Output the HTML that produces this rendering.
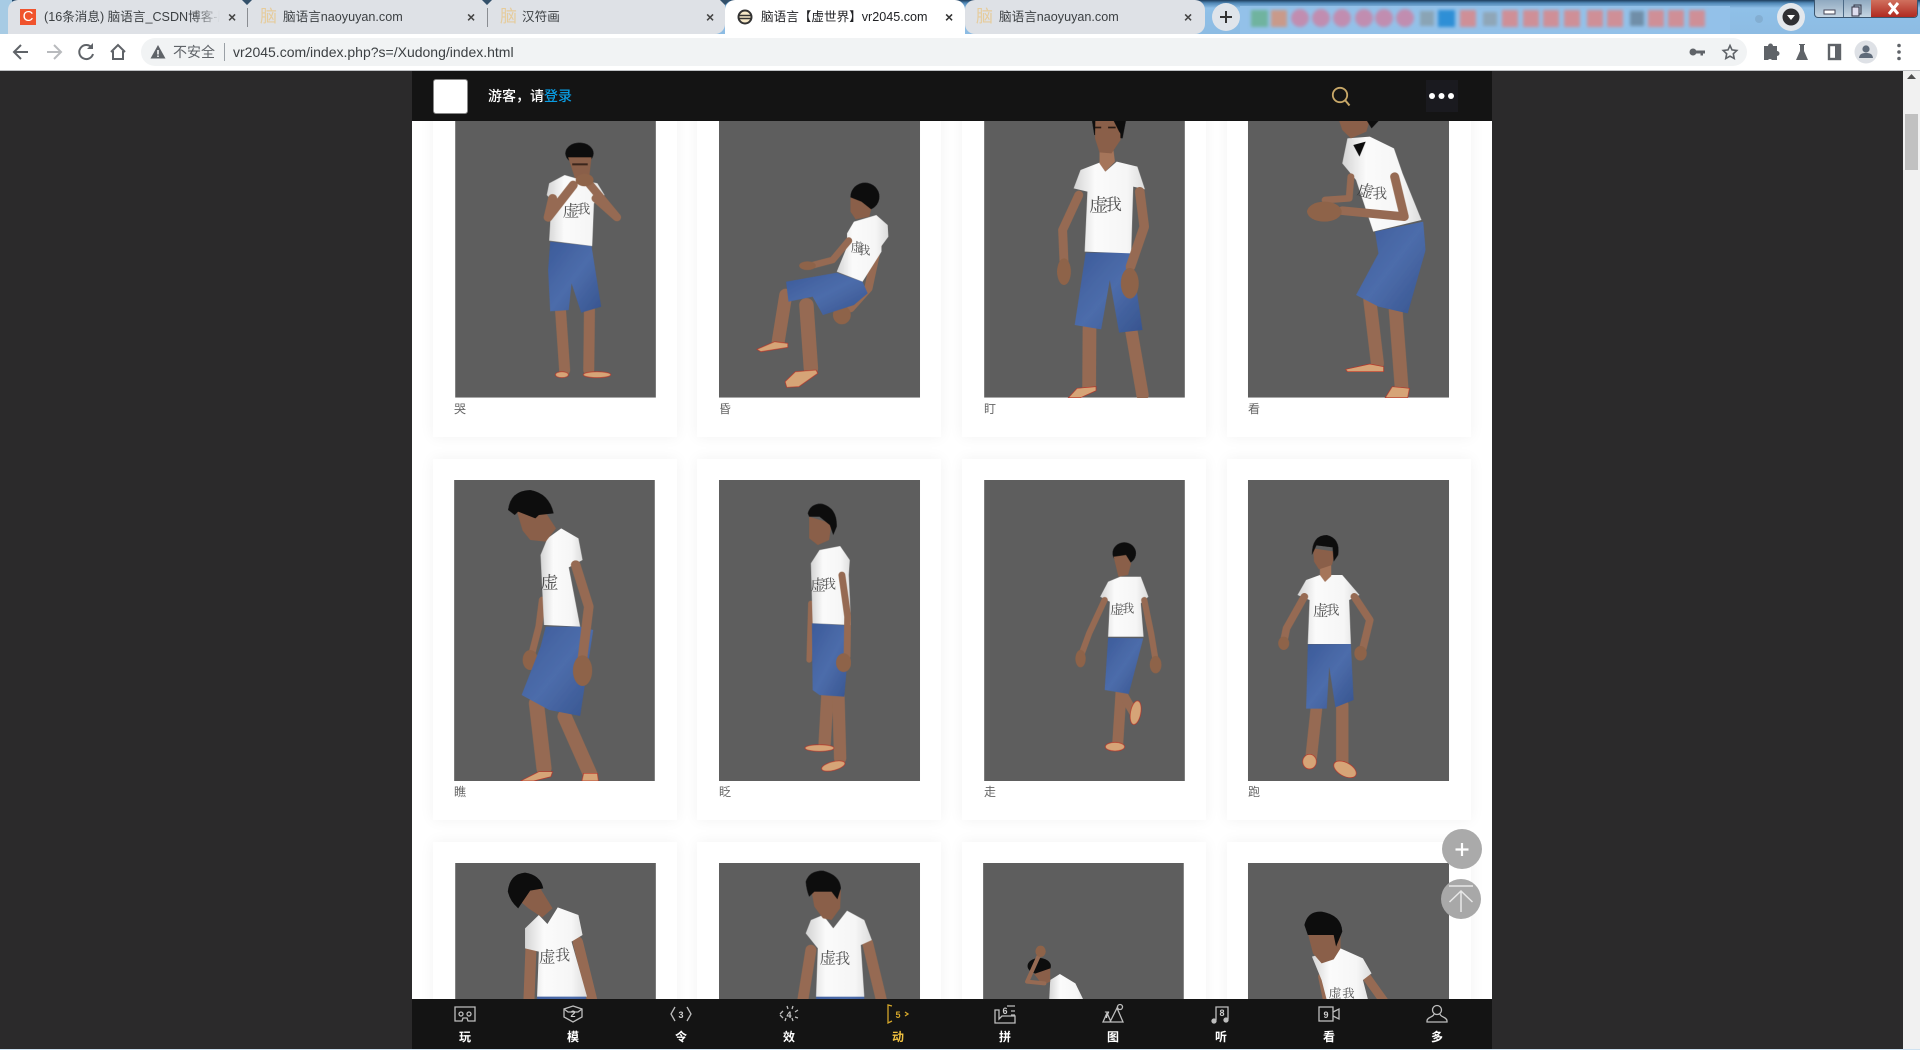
<!DOCTYPE html>
<html lang="zh"><head><meta charset="utf-8"><title>脑语言【虚世界】vr2045.com</title>
<style>
*{box-sizing:border-box}
html,body{margin:0;padding:0;width:1920px;height:1050px;overflow:hidden;background:#2b2a2b;font-family:"Liberation Sans","Noto Sans CJK SC",sans-serif}
.a{position:absolute}
.tab{position:absolute;top:0;height:34px;font-size:12.6px;line-height:34px;color:#3c4043;white-space:nowrap}
.x{font-size:14px;color:#444;font-weight:700}
.ic{color:#e6cc9c;font-size:17px}
.card{position:absolute;width:244px;background:#fff;box-shadow:0 0 14px rgba(0,0,0,.055)}
.lb{position:absolute;font-size:12px;line-height:14px;color:#666}
svg.f{position:absolute;z-index:2}
svg text.s{font-family:"Liberation Serif","Noto Serif CJK SC",serif;fill:#333;font-weight:400;opacity:.85}
.sh{fill:url(#gsh)}.hr{fill:#0c0c0d}.fc{fill:#8a5f48}.st{fill:url(#gst)}
.sk{fill:none;stroke:#966b52;stroke-linecap:round;stroke-linejoin:round}
.hd{fill:#8e6349}
.fl{fill:#d6a477;stroke:#b9362a;stroke-width:2}
</style></head><body>

<!-- browser chrome -->
<div class="a" style="left:0;top:0;width:1920px;height:34px;background:linear-gradient(#1d3d5c 0,#4f86b5 3px,#8fc0e8 8px,#8dbce3 34px)"></div>
<div class="a" style="left:0;top:0;width:12px;height:34px;background:#a7cbe4"></div>
<div class="a" style="left:8px;top:0;width:717px;height:34px;background:#dee1e6;border-radius:10px 0 10px 0"></div>
<div class="a" style="left:965px;top:0;width:240px;height:34px;background:#dee1e6;border-radius:10px 10px 10px 10px"></div>
<div class="a" style="left:725px;top:0;width:240px;height:34px;background:#fff;border-radius:10px 10px 0 0"></div>
<div class="a" style="left:247px;top:8px;width:1px;height:19px;background:#8a8d92"></div>
<div class="a" style="left:487px;top:8px;width:1px;height:19px;background:#8a8d92"></div>
<svg class="a" style="left:0;top:0" width="1920" height="6"><path d="M242 0l5 5 5-5zM482 0l5 5 5-5zM720 0l5 5 5-5z" fill="#33506a"/></svg>

<div class="a" style="left:20px;top:9px;width:16px;height:16px;background:#f0532d;color:#fff;font-size:15px;line-height:16px;text-align:center">C</div>
<div class="tab" style="left:44px;width:176px;overflow:hidden;-webkit-mask-image:linear-gradient(90deg,#000 85%,transparent)">(16条消息) 脑语言_CSDN博客-脑语言</div>
<div class="tab x" style="left:228px">×</div>
<div class="tab ic" style="left:260px">脑</div>
<div class="tab" style="left:283px">脑语言naoyuyan.com</div>
<div class="tab x" style="left:467px">×</div>
<div class="tab ic" style="left:500px">脑</div>
<div class="tab" style="left:522px">汉符画</div>
<div class="tab x" style="left:706px">×</div>
<svg class="a" style="left:737px;top:9px" width="16" height="16"><circle cx="8" cy="8" r="6.5" fill="#f7e9c8" stroke="#333" stroke-width="2"/><path d="M2 6.5h12M2 9.5h12" stroke="#333" stroke-width="1.6"/></svg>
<div class="tab" style="left:761px;color:#202124">脑语言【虚世界】vr2045.com</div>
<div class="tab x" style="left:945px;color:#333">×</div>
<div class="tab ic" style="left:976px">脑</div>
<div class="tab" style="left:999px">脑语言naoyuyan.com</div>
<div class="tab x" style="left:1184px">×</div>

<svg class="a" style="left:1212px;top:3px" width="30" height="28"><circle cx="14" cy="14" r="14" fill="#dfe4ea"/><path d="M14 8v12M8 14h12" stroke="#333" stroke-width="2"/></svg>
<svg class="a" style="left:1240px;top:0" width="520" height="34">
<defs><filter id="bl" x="-30%" y="-30%" width="160%" height="160%"><feGaussianBlur stdDeviation="1.700"/></filter></defs>
<rect x="0" y="6" width="490" height="28" fill="#93c1e9"/>
<g filter="url(#bl)">
<rect x="11" y="10" width="17" height="17" fill="#6fb39f"/><rect x="31" y="10" width="16" height="17" fill="#c99a8a"/>
<g fill="#c18db0"><circle cx="60" cy="18" r="9"/><circle cx="81" cy="18" r="9"/><circle cx="102" cy="18" r="9"/><circle cx="124" cy="18" r="9"/><circle cx="144" cy="18" r="9"/><circle cx="165" cy="18" r="9"/></g>
<rect x="180" y="11" width="14" height="15" fill="#8aa4b5"/><rect x="198" y="10" width="17" height="17" fill="#2f8fd6"/>
<g fill="#cf8f97"><rect x="220" y="10" width="16" height="17"/><rect x="262" y="10" width="16" height="17"/><rect x="283" y="10" width="16" height="17"/><rect x="303" y="10" width="16" height="17"/><rect x="324" y="10" width="16" height="17"/><rect x="347" y="10" width="16" height="17"/><rect x="367" y="10" width="16" height="17"/><rect x="408" y="10" width="16" height="17"/><rect x="428" y="10" width="16" height="17"/><rect x="449" y="10" width="16" height="17"/></g>
<rect x="243" y="12" width="14" height="14" fill="#8fa6b8"/><rect x="390" y="11" width="14" height="15" fill="#6f8ea8"/>
</g></svg>
<svg class="a" style="left:1752px;top:3px" width="56" height="28"><circle cx="7" cy="16" r="4" fill="#7fa7c9" opacity=".7"/><circle cx="39" cy="14" r="14" fill="#e3e7ec"/><circle cx="39" cy="14" r="8.5" fill="#2f2f33"/><path d="M35 12h8l-4 5z" fill="#fff"/></svg>
<div class="a" style="left:1814px;top:0;width:104px;height:18px;border:1px solid #3b5670;border-top:0;border-radius:0 0 4px 4px;background:linear-gradient(#8fa9c0,#c5d5e2);overflow:hidden">
<div class="a" style="left:56px;top:0;width:47px;height:17px;background:linear-gradient(#d0705e,#b02a20)"></div>
<div class="a" style="left:28px;top:0;width:1px;height:17px;background:#4d6a86"></div>
<svg class="a" style="left:0;top:0" width="104" height="18"><rect x="9" y="10" width="11" height="4" fill="#fff" stroke="#445"/><rect x="39" y="5" width="7" height="9" fill="none" stroke="#334" /><rect x="37" y="7" width="7" height="9" fill="#dde" stroke="#334"/><path d="M74 3l9 11M83 3l-9 11" stroke="#fff" stroke-width="3"/></svg></div>

<div class="a" style="left:0;top:34px;width:1920px;height:36px;background:#fff"></div>
<div class="a" style="left:0;top:70px;width:1920px;height:1px;background:#bfc1c4"></div>
<svg class="a" style="left:0;top:34px" width="140" height="36" fill="none" stroke="#5f6368" stroke-width="2">
<path d="M28 18H15M21 11l-7 7 7 7"/><path d="M47 18h13M54 11l7 7-7 7" stroke="#b8babd"/>
<path d="M92 14a7 7 0 1 0 1 6" /><path d="M93 9v6h-6" fill="#5f6368" stroke="none"/>
<path d="M111 18l7-7 7 7M113 17v8h10v-8"/></svg>
<div class="a" style="left:141px;top:38px;width:1606px;height:28px;border-radius:14px;background:#f1f3f4"></div>
<svg class="a" style="left:150px;top:44px" width="16" height="16"><path d="M8 1l7.5 13.5H.5z" fill="#5f6368"/><path d="M8 6v4.5M8 11.500v1.500" stroke="#fff" stroke-width="1.5"/></svg>
<div class="a" style="left:173px;top:44px;font-size:14px;line-height:16px;color:#5f6368">不安全</div>
<div class="a" style="left:224px;top:43px;width:1px;height:18px;background:#9aa0a6"></div>
<div class="a" style="left:233px;top:43px;font-size:14px;line-height:18px;color:#3c4043">vr2045.com/index.php?s=/Xudong/index.html</div>
<svg class="a" style="left:1688px;top:34px" width="232" height="36">
<g fill="#5f6368"><circle cx="5" cy="18" r="3.500"/><path d="M7 16.500h10v3h-2v2h-2.500v-2H7z"/></g>
<path d="M42 11.500l2 4.400 4.800.6-3.500 3.300.9 4.700-4.200-2.300-4.200 2.300.9-4.700-3.500-3.300 4.800-.6z" fill="none" stroke="#5f6368" stroke-width="1.600"/>
<path d="M76 12h4a2.500 2.500 0 0 1 5 0h4v5a2.500 2.500 0 0 1 0 5v4h-5a2.500 2.500 0 0 0-4 0h-4z" fill="#5f6368"/>
<path d="M111 10h6v1h-1v6l4 9h-12l4-9v-6h-1z" fill="#5f6368"/>
<rect x="141" y="11" width="11" height="14" fill="none" stroke="#5f6368" stroke-width="2.400"/><rect x="147" y="11" width="5" height="14" fill="#5f6368"/>
<circle cx="178" cy="18" r="11.500" fill="#dee1e6"/><circle cx="178" cy="15" r="3.600" fill="#5f6b7a"/><path d="M171 24c.5-4 3-5 7-5s6.500 1 7 5z" fill="#5f6b7a"/>
<g fill="#5f6368"><circle cx="211" cy="11.500" r="1.800"/><circle cx="211" cy="18" r="1.800"/><circle cx="211" cy="24.500" r="1.800"/></g>
</svg>

<!-- page -->
<div class="a" style="left:412px;top:71px;width:1080px;height:978px;background:#fff;overflow:hidden" id="m"></div>
<div class="a" style="left:1903px;top:71px;width:17px;height:979px;background:#f1f1f1"></div>
<svg class="a" style="left:1903px;top:71px" width="17" height="12"><path d="M8.500 3l4.500 5H4z" fill="#505050"/></svg>
<div class="a" style="left:1905px;top:114px;width:13px;height:56px;background:#c1c1c1"></div>

<div class="card" style="left:433px;top:100px;height:337px"></div>
<div class="card" style="left:697px;top:100px;height:337px"></div>
<div class="card" style="left:962px;top:100px;height:337px"></div>
<div class="card" style="left:1227px;top:100px;height:337px"></div>
<div class="card" style="left:433px;top:459px;height:361px"></div>
<div class="card" style="left:697px;top:459px;height:361px"></div>
<div class="card" style="left:962px;top:459px;height:361px"></div>
<div class="card" style="left:1227px;top:459px;height:361px"></div>
<div class="card" style="left:433px;top:842px;height:200px"></div>
<div class="card" style="left:697px;top:842px;height:200px"></div>
<div class="card" style="left:962px;top:842px;height:200px"></div>
<div class="card" style="left:1227px;top:842px;height:200px"></div>

<div class="lb" style="left:454px;top:402px">哭</div><div class="lb" style="left:719px;top:402px">昏</div><div class="lb" style="left:984px;top:402px">盯</div><div class="lb" style="left:1248px;top:402px">看</div>
<div class="lb" style="left:454px;top:785px">瞧</div><div class="lb" style="left:719px;top:785px">眨</div><div class="lb" style="left:984px;top:785px">走</div><div class="lb" style="left:1248px;top:785px">跑</div>

<svg width="0" height="0" style="position:absolute"><defs>
<filter id="sf"><feGaussianBlur stdDeviation="1"/></filter>
<linearGradient id="gsh"><stop offset="0" stop-color="#d4d4d4"/><stop offset=".3" stop-color="#fbfbfb"/><stop offset=".75" stop-color="#f6f6f6"/><stop offset="1" stop-color="#dcdcdc"/></linearGradient>
<linearGradient id="gst" x1="0" y1="0" x2="1" y2="1"><stop offset="0" stop-color="#3c5b9a"/><stop offset=".5" stop-color="#4d6dab"/><stop offset="1" stop-color="#37548f"/></linearGradient>
</defs></svg>

<!-- row 1 left -->
<svg class="f" style="left:420px;top:120px" width="540" height="340" viewBox="0 0 1568 1020" preserveAspectRatio="none">
<defs><clipPath id="c1"><rect x="102" y="0" width="583" height="833"/></clipPath><clipPath id="c2"><rect x="868" y="0" width="584" height="833"/></clipPath></defs>
<g clip-path="url(#c1)"><rect x="102" y="0" width="583" height="833" fill="#5e5e5e"/><g filter="url(#sf)">
<polyline class="sk" stroke-width="32" points="408,570 420,750" /><polyline class="sk" stroke-width="32" points="492,570 490,750"/>
<ellipse class="fl" cx="412" cy="764" rx="19" ry="9"/><ellipse class="fl" cx="514" cy="764" rx="40" ry="9"/>
<polygon class="st" points="378,365 498,378 526,560 468,578 440,490 432,570 378,574 372,450"/>
<polygon class="sh" points="375,190 420,165 470,180 515,190 536,225 505,250 500,378 375,362 382,240 368,225"/>
<ellipse class="hr" cx="463" cy="100" rx="41" ry="32"/><polygon class="fc" points="430,112 498,112 492,165 450,175"/><rect x="442" y="130" width="45" height="6" fill="#3a251b"/>
<polyline class="sk" stroke-width="26" points="385,235 372,292 445,195"/><polyline class="sk" stroke-width="24" points="510,235 572,292 490,190"/>
<ellipse class="hd" cx="478" cy="180" rx="26" ry="19"/>
<text class="s" x="414" y="290" font-size="48">虚</text><text class="s" x="455" y="280" font-size="40">我</text>
</g></g>
<g clip-path="url(#c2)"><rect x="868" y="0" width="584" height="833" fill="#5e5e5e"/><g filter="url(#sf)">
<polyline class="sk" stroke-width="38" points="1062,525 1040,665"/><polyline class="sk" stroke-width="42" points="1122,555 1135,745"/>
<polygon class="fl" points="978,688 1030,665 1068,670 1068,682 990,695"/><polygon class="fl" points="1060,785 1090,755 1150,750 1155,760 1100,800 1065,802"/>
<polyline class="sk" stroke-width="24" points="1330,370 1302,505 1250,565"/><ellipse class="hd" cx="1225" cy="585" rx="26" ry="28"/>
<polygon class="st" points="1063,485 1210,458 1285,485 1300,520 1260,555 1170,585 1140,530 1070,545"/>
<polygon class="sh" points="1240,340 1260,305 1325,285 1358,315 1360,350 1340,378 1340,395 1285,485 1210,455 1240,380"/>
<ellipse class="hr" cx="1292" cy="230" rx="42" ry="42"/><polygon class="fc" points="1250,232 1282,245 1310,268 1305,290 1265,298 1250,275"/>
<polyline class="sk" stroke-width="20" points="1245,362 1198,420 1135,437"/><ellipse class="hd" cx="1125" cy="437" rx="24" ry="13"/>
<text class="s" x="1250" y="395" font-size="38">虚</text><text class="s" x="1272" y="403" font-size="36">我</text>
</g></g></svg>

<!-- row 1 right -->
<svg class="f" style="left:960px;top:120px" width="540" height="340" viewBox="0 0 1568 1020" preserveAspectRatio="none">
<defs><clipPath id="c3"><rect x="70" y="0" width="583" height="833"/></clipPath><clipPath id="c4"><rect x="836" y="0" width="584" height="833"/></clipPath></defs>
<g clip-path="url(#c3)"><rect x="70" y="0" width="583" height="833" fill="#5e5e5e"/><g filter="url(#sf)">
<polyline class="sk" stroke-width="40" points="376,625 375,800"/><polyline class="sk" stroke-width="36" points="498,635 530,825"/>
<polygon class="fl" points="315,833 340,805 395,800 395,812 350,833"/>
<polygon class="st" points="365,398 497,398 530,630 462,638 435,480 410,628 333,615"/>
<polygon class="sh" points="330,205 350,150 405,128 422,155 455,125 515,140 537,208 503,200 497,400 362,395 370,215"/>
<polygon fill="#a5745a" points="405,85 445,85 450,125 422,155 405,130"/>
<polygon class="hr" points="383,0 482,0 472,55 390,45"/>
<polygon class="fc" points="393,0 465,0 466,60 440,100 405,97 392,55"/>
<rect x="392" y="20" width="18" height="5" fill="#2a1b14"/><rect x="430" y="20" width="22" height="5" fill="#2a1b14"/><polygon class="hr" points="445,0 482,0 472,50 462,35"/>
<polyline class="sk" stroke-width="26" points="345,225 298,330 302,425"/><ellipse class="hd" cx="302" cy="455" rx="20" ry="40"/>
<polyline class="sk" stroke-width="28" points="522,215 535,320 495,440"/><ellipse class="hd" cx="493" cy="490" rx="26" ry="46"/>
<text class="s" x="375" y="275" font-size="55">虚</text><text class="s" x="420" y="270" font-size="50">我</text>
</g></g>
<g clip-path="url(#c4)"><rect x="836" y="0" width="584" height="833" fill="#5e5e5e"/><g filter="url(#sf)">
<polyline class="sk" stroke-width="38" points="1190,540 1212,730"/><polyline class="sk" stroke-width="40" points="1265,570 1282,800"/>
<polygon class="fl" points="1120,748 1190,732 1230,740 1230,755 1125,755"/><polygon class="fl" points="1235,833 1255,800 1305,805 1300,833"/>
<polygon class="st" points="1205,335 1345,305 1352,390 1300,580 1215,560 1150,525 1215,400"/>
<polygon class="sh" points="1125,55 1190,50 1260,85 1285,160 1340,300 1200,335 1150,180 1110,130"/>
<polygon class="fc" points="1100,0 1190,0 1180,35 1135,55 1110,30"/><polygon class="hr" points="1180,0 1218,0 1195,25"/>
<polygon class="hr" points="1142,75 1178,65 1160,110"/>
<polyline class="sk" stroke-width="20" points="1135,170 1130,235 1060,240"/>
<polyline class="sk" stroke-width="26" points="1262,170 1290,290 1110,272"/><ellipse class="hd" cx="1058" cy="275" rx="50" ry="30"/>
<text class="s" x="1155" y="230" font-size="48" transform="rotate(15 1180 210)">虚</text><text class="s" x="1198" y="235" font-size="42">我</text>
</g></g></svg>

<!-- row 2 left -->
<svg class="f" style="left:420px;top:460px" width="540" height="340" viewBox="0 0 1568 1020" preserveAspectRatio="none">
<defs><clipPath id="c5"><rect x="99" y="60" width="583" height="903"/></clipPath><clipPath id="c6"><rect x="868" y="60" width="584" height="903"/></clipPath></defs>
<g clip-path="url(#c5)"><rect x="99" y="60" width="583" height="903" fill="#5e5e5e"/><g filter="url(#sf)">
<polyline class="sk" stroke-width="44" points="338,730 360,925"/><polyline class="sk" stroke-width="42" points="420,770 495,945"/>
<polygon class="fl" points="292,963 345,935 385,935 380,950 330,963"/><polygon class="fl" points="470,963 475,940 515,940 518,963"/>
<polyline class="sk" stroke-width="20" points="355,420 345,500 325,580"/><ellipse class="hd" cx="320" cy="600" rx="22" ry="30"/>
<polygon class="st" points="365,500 465,500 503,510 465,768 375,750 295,705 350,560"/>
<polygon class="sh" points="350,285 370,235 410,205 460,235 472,300 432,322 465,500 360,495"/>
<polyline class="sk" stroke-width="28" points="452,315 490,440 470,610"/><ellipse class="hd" cx="472" cy="632" rx="28" ry="46"/>
<polygon class="fc" points="280,150 360,150 395,205 365,245 320,240 298,212"/>
<path class="hr" d="M256 150 Q262 92 320 90 Q375 100 388 160 L345 165 L335 175 L285 155 L275 165Z"/>
<text class="s" x="350" y="385" font-size="52">虚</text>
</g></g>
<g clip-path="url(#c6)"><rect x="868" y="60" width="584" height="903" fill="#5e5e5e"/><g filter="url(#sf)">
<polyline class="sk" stroke-width="36" points="1183,705 1175,850"/><polyline class="sk" stroke-width="36" points="1215,710 1220,895"/>
<ellipse class="fl" cx="1160" cy="864" rx="42" ry="10"/><ellipse class="fl" cx="1200" cy="918" rx="35" ry="13" transform="rotate(-15 1200 918)"/>
<polyline class="sk" stroke-width="16" points="1135,430 1130,600"/>
<polygon class="st" points="1138,490 1250,497 1232,710 1160,705 1140,690"/>
<polygon class="sh" points="1135,310 1160,270 1220,258 1248,300 1245,345 1252,495 1140,490"/>
<polyline class="sk" stroke-width="20" points="1225,345 1242,470 1240,590"/><ellipse class="hd" cx="1230" cy="608" rx="22" ry="28"/>
<polygon class="fc" points="1130,170 1195,190 1188,240 1155,255 1130,235"/>
<path class="hr" d="M1126 160 Q1135 128 1170 132 Q1212 145 1210 200 L1200 225 L1190 195 L1160 170 L1130 170Z"/>
<text class="s" x="1134" y="390" font-size="44">虚</text><text class="s" x="1168" y="385" font-size="40">我</text>
</g></g></svg>

<!-- row 2 right -->
<svg class="f" style="left:960px;top:460px" width="540" height="340" viewBox="0 0 1568 1020" preserveAspectRatio="none">
<defs><clipPath id="c7"><rect x="70" y="60" width="583" height="903"/></clipPath><clipPath id="c8"><rect x="836" y="60" width="584" height="903"/></clipPath></defs>
<g clip-path="url(#c7)"><rect x="70" y="60" width="583" height="903" fill="#5e5e5e"/><g filter="url(#sf)">
<polyline class="sk" stroke-width="32" points="468,690 458,850"/><polyline class="sk" stroke-width="26" points="472,700 508,765"/>
<ellipse class="fl" cx="510" cy="758" rx="15" ry="36" transform="rotate(10 510 758)"/><ellipse class="fl" cx="450" cy="860" rx="28" ry="13"/>
<polygon class="st" points="430,533 532,535 490,702 420,690"/>
<polygon class="sh" points="407,410 430,365 465,350 525,350 547,410 525,430 533,530 430,530 435,425"/>
<polyline class="sk" stroke-width="18" points="420,420 375,520 352,585"/><ellipse class="hd" cx="350" cy="596" rx="15" ry="26"/>
<polyline class="sk" stroke-width="18" points="535,420 555,520 567,595"/><ellipse class="hd" cx="568" cy="614" rx="17" ry="26"/>
<ellipse class="hr" cx="477" cy="280" rx="34" ry="33"/><polygon class="fc" points="446,290 482,285 497,310 488,345 460,350"/>
<text class="s" x="436" y="462" font-size="40">虚</text><text class="s" x="470" y="458" font-size="36">我</text>
</g></g>
<g clip-path="url(#c8)"><rect x="836" y="60" width="584" height="903" fill="#5e5e5e"/><g filter="url(#sf)">
<polyline class="sk" stroke-width="34" points="1035,745 1020,890"/><polyline class="sk" stroke-width="36" points="1110,735 1110,910"/>
<ellipse class="fl" cx="1015" cy="905" rx="20" ry="22"/><ellipse class="fl" cx="1118" cy="928" rx="36" ry="20" transform="rotate(30 1118 928)"/>
<polygon class="st" points="1010,553 1135,552 1143,720 1090,742 1072,620 1065,746 1005,746"/>
<polygon class="sh" points="980,405 1005,360 1045,345 1110,345 1160,405 1130,420 1135,552 1010,552 1015,420"/>
<polyline class="sk" stroke-width="22" points="1000,410 948,505 940,545"/><ellipse class="hd" cx="940" cy="550" rx="16" ry="20"/>
<polyline class="sk" stroke-width="22" points="1145,410 1190,480 1170,565"/><ellipse class="hd" cx="1163" cy="580" rx="18" ry="22"/>
<polygon fill="#a5745a" points="1045,320 1078,315 1078,348 1060,366 1045,345"/><polygon class="fc" points="1025,265 1090,275 1080,315 1042,328 1028,305"/>
<path class="hr" d="M1022 285 Q1022 225 1065 225 Q1105 235 1098 285 L1085 305 L1082 262 L1035 256 Z"/>
<text class="s" x="1025" y="466" font-size="44">虚</text><text class="s" x="1062" y="464" font-size="40">我</text>
</g></g></svg>

<!-- row 3 left -->
<svg class="f" style="left:420px;top:800px" width="540" height="250" viewBox="0 0 1568 750" preserveAspectRatio="none">
<defs><clipPath id="c9"><rect x="102" y="189" width="583" height="500"/></clipPath><clipPath id="c10"><rect x="868" y="189" width="584" height="500"/></clipPath></defs>
<g clip-path="url(#c9)"><rect x="102" y="189" width="583" height="500" fill="#5e5e5e"/><g filter="url(#sf)">
<polyline class="sk" stroke-width="32" points="322,450 316,610"/><polyline class="sk" stroke-width="30" points="458,425 502,610"/>
<polygon class="st" points="340,580 480,580 485,620 340,620"/>
<polygon class="sh" points="305,445 305,385 345,345 370,372 400,322 460,345 472,405 440,425 485,590 340,590 345,455"/>
<polygon class="fc" points="275,290 345,258 385,325 355,352 315,325"/><path class="hr" d="M255 275 Q260 222 305 218 Q350 225 358 265 L320 272 L285 325 Q262 305 255 275Z"/>
<text class="s" x="345" y="488" font-size="48">虚</text><text class="s" x="392" y="480" font-size="44">我</text>
</g></g>
<g clip-path="url(#c10)"><rect x="868" y="189" width="584" height="500" fill="#5e5e5e"/><g filter="url(#sf)">
<polyline class="sk" stroke-width="32" points="1135,450 1110,610"/><polyline class="sk" stroke-width="32" points="1300,430 1342,610"/>
<polygon class="st" points="1150,580 1290,580 1290,620 1150,620"/>
<polygon class="sh" points="1120,400 1135,360 1170,345 1200,385 1240,332 1290,360 1312,420 1280,435 1290,590 1150,590 1155,445"/>
<polygon class="fc" points="1135,265 1222,270 1220,325 1195,360 1170,355 1145,320"/><path class="hr" d="M1120 245 Q1130 212 1170 212 Q1220 225 1222 265 L1212 298 L1195 275 L1145 275 L1130 290 Q1122 270 1120 245Z"/>
<text class="s" x="1160" y="490" font-size="48">虚</text><text class="s" x="1205" y="490" font-size="44">我</text>
</g></g></svg>

<!-- row 3 right -->
<svg class="f" style="left:960px;top:800px" width="540" height="250" viewBox="0 0 1568 750" preserveAspectRatio="none">
<defs><clipPath id="c11"><rect x="67" y="189" width="583" height="500"/></clipPath><clipPath id="c12"><rect x="836" y="189" width="584" height="500"/></clipPath></defs>
<g clip-path="url(#c11)"><rect x="67" y="189" width="583" height="500" fill="#5e5e5e"/><g filter="url(#sf)">
<polygon class="sh" points="258,620 262,540 290,522 335,550 368,620"/>
<ellipse class="hr" cx="230" cy="498" rx="34" ry="24"/><polygon class="fc" points="215,522 262,505 262,545 240,555"/>
<polyline class="sk" stroke-width="12" points="232,460 195,545 245,550"/><ellipse class="hd" cx="234" cy="454" rx="15" ry="17"/>
</g></g>
<g clip-path="url(#c12)"><rect x="836" y="189" width="584" height="500" fill="#5e5e5e"/><g filter="url(#sf)">
<polyline class="sk" stroke-width="24" points="1052,530 1068,610"/><polyline class="sk" stroke-width="26" points="1180,530 1232,605"/>
<polygon class="sh" points="1022,470 1105,445 1170,475 1195,520 1170,540 1190,620 1070,620 1050,540"/>
<polygon class="fc" points="1010,400 1105,400 1105,445 1085,478 1050,490 1025,460"/><path class="hr" d="M1000 375 Q1010 332 1050 335 Q1108 345 1110 395 L1092 440 L1085 405 L1010 405 Z"/>
<text class="s" x="1070" y="592" font-size="38">虚</text><text class="s" x="1110" y="592" font-size="36">我</text>
</g></g></svg>

<!-- floating buttons -->
<svg class="a" style="left:1440px;top:827px;z-index:3" width="46" height="95">
<circle cx="22" cy="22" r="20" fill="#aaa"/><path d="M22 16v13M15.500 22.500h13" stroke="#fff" stroke-width="2.200"/>
<circle cx="21" cy="72" r="20" fill="#a8a8a8"/><path d="M9 59h24M21 85V64M9.500 75L21 64l11.500 11" fill="none" stroke="#e8e8e8" stroke-width="1.500"/></svg>

<!-- header -->
<div class="a" style="left:412px;top:71px;width:1080px;height:50px;background:#141414;z-index:4">
<div class="a" style="left:21px;top:8px;width:35px;height:35px;background:#fff;border-radius:3px;border:1px solid #888"></div>
<div class="a" style="left:76px;top:17px;font-size:14px;font-weight:500;line-height:16px;color:#fff;white-space:nowrap">游客，请<span style="color:#0a9be0">登录</span></div>
<div class="a" style="left:1014px;top:9px;width:32px;height:32px;background:#1a1a1f"></div>
<svg class="a" style="left:918px;top:15px" width="140" height="22"><circle cx="10" cy="9" r="7.200" fill="none" stroke="#c8a868" stroke-width="1.800"/><path d="M15 14l4.500 5.500" stroke="#c8a868" stroke-width="2"/><g fill="#fff"><circle cx="102" cy="10" r="3"/><circle cx="111.500" cy="10" r="3"/><circle cx="121" cy="10" r="3"/></g></svg>
</div>

<!-- bottom nav -->
<svg class="a" style="left:412px;top:999px;z-index:4" width="1080" height="50" viewBox="0 0 1080 50">
<rect width="1080" height="50" fill="#141414"/>
<g font-family="'Liberation Sans','Noto Sans CJK SC',sans-serif" font-size="12" font-weight="700" text-anchor="middle" fill="#fff">
<text x="53" y="42">玩</text><text x="161" y="42">模</text><text x="269" y="42">令</text><text x="377" y="42">效</text><text x="486" y="42" fill="#f0c040">动</text><text x="593" y="42">拼</text><text x="701" y="42">图</text><text x="809" y="42">听</text><text x="917" y="42">看</text><text x="1025" y="42">多</text>
</g>
<g fill="none" stroke="#bdbdbd" stroke-width="1.300">
<g transform="translate(53,15)"><path d="M-10-7h20v14h-7l-1-3h-4l-1 3h-7z"/><circle cx="-4" cy="0" r="2"/><circle cx="4" cy="0" r="2"/></g>
<g transform="translate(161,15)"><path d="M0-8l9 3v8l-9 5-9-5v-8z"/><path d="M-9-5l4 3h10l4-3"/></g>
<g transform="translate(269,15)"><path d="M-6-7l-4 7 4 7M6-7l4 7-4 7"/></g>
<g transform="translate(377,15)"><path d="M-9 0l3-3M-9 1l3 3M-2-8l1 3M4-8l-1 3M9-4l-3 2M9 4l-3-1M-4 7l1-3M4 7l-1-3"/></g>
<g transform="translate(486,15)" stroke="#d4a62a"><path d="M-6-8l-4-1v18l4-2M7-2l3 2-3 2"/></g>
<g transform="translate(593,15)"><path d="M-10-4l4 0v9l3-3h13v7h-20zM2-8h8M6-3h4M6 1h4"/></g>
<g transform="translate(701,15)"><path d="M-10 8l4-9 4 9zM-3 8l7-14 6 14z"/><circle cx="7" cy="-7" r="2.500"/></g>
<g transform="translate(809,15)"><path d="M-5 6v-13h12v12"/><circle cx="-7" cy="7" r="2" fill="#bdbdbd"/><circle cx="5" cy="6" r="2" fill="#bdbdbd"/></g>
<g transform="translate(917,15)"><rect x="-10" y="-7" width="14" height="14"/><path d="M4-2l6-3v10l-6-3"/></g>
<g transform="translate(1025,15)"><circle cx="0" cy="-4" r="4.500"/><path d="M-3 0c0 3-7 3-7 7v1h20v-1c0-4-7-4-7-7"/></g>
</g>
<g font-family="'Liberation Sans',sans-serif" font-size="9" font-weight="700" text-anchor="middle" fill="#cfcfcf">
<text x="161" y="18">2</text><text x="269" y="19">3</text><text x="377" y="19">4</text><text x="486" y="19" fill="#d4a62a">5</text><text x="593" y="15">6</text><text x="695" y="19">7</text><text x="810" y="17">8</text><text x="914" y="19">9</text>
</g>
</svg>
<div class="a" style="left:0;top:1049px;width:1920px;height:1px;background:#cfe3f2;z-index:5"></div>
</body></html>
